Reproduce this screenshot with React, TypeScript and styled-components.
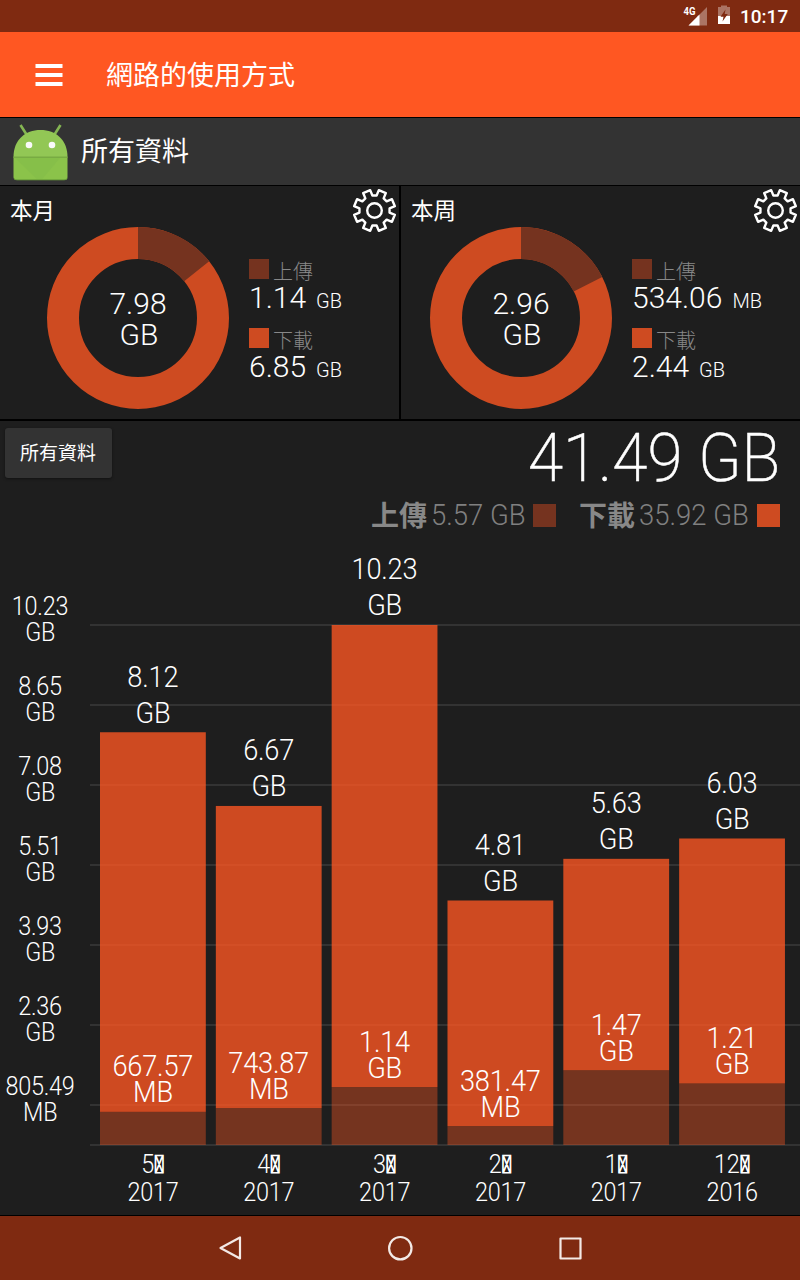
import React from "react";
import styled, { createGlobalStyle } from "styled-components";

const UP = "#75331f";
const DOWN = "#ce4b21";
const PANEL = "#1e1e1e";

const GlobalStyle = createGlobalStyle`
  * { box-sizing: border-box; }
  body {
    margin: 0;
    background: #000;
    color: #fff;
    font-family: Roboto, "Noto Sans CJK TC", sans-serif;
  }
  svg { display: block; }
`;

const Screen = styled.div`
  width: 800px;
  height: 1280px;
  display: flex;
  flex-direction: column;
  background: #000;
  overflow: hidden;
`;

const StatusBar = styled.div`
  height: 32px;
  flex: none;
  background: #7f2a11;
  display: flex;
  justify-content: flex-end;
  align-items: center;
  padding-right: 11px;
`;

const Clock = styled.span`
  width: 49px;
  margin-left: 9px;
  padding-top: 1px;
  font-size: 19px;
  line-height: 32px;
  font-weight: 500;
  white-space: nowrap;
`;

const Toolbar = styled.header`
  height: 85px;
  flex: none;
  background: #ff5722;
  display: flex;
  align-items: center;
  padding-left: 35px;
  margin-bottom: 1px;
`;

const Title = styled.h1`
  margin: 2px 0 0 43px;
  font-size: 27px;
  line-height: 40px;
  font-weight: 400;
`;

const AppRow = styled.div`
  height: 67px;
  flex: none;
  background: #333;
  display: flex;
  align-items: center;
  padding-left: 12px;
  margin-bottom: 1px;
`;

const AppName = styled.div`
  margin-left: 12px;
  padding-top: 1px;
  font-size: 27px;
  line-height: 40px;
`;

const Cards = styled.div`
  flex: none;
  height: 233px;
  display: grid;
  grid-template-columns: 399px 399px;
  column-gap: 2px;
  margin-bottom: 2px;
`;

const Card = styled.section`
  background: ${PANEL};
  display: flex;
  flex-direction: column;
`;

const CardHead = styled.div`
  height: 41px;
  display: flex;
  justify-content: space-between;
  padding: 2px 2px 0 10px;
`;

const CardTitle = styled.div`
  font-size: 22.5px;
  line-height: 47px;
`;

const CardBody = styled.div<{ $inset: number }>`
  display: flex;
  padding-left: ${(p) => p.$inset}px;
`;

const Legend = styled.div`
  margin: 32px 0 0 20px;
`;

const LegendItem = styled.div`
  height: 69px;
`;

const LegendName = styled.div`
  height: 20px;
  display: flex;
  gap: 4px;
  color: #888;
  font-size: 20px;
  line-height: 26px;
  font-weight: 300;
`;

const Swatch = styled.span<{ $color: string; $size: number }>`
  flex: none;
  width: ${(p) => p.$size}px;
  height: ${(p) => p.$size}px;
  background: ${(p) => p.$color};
`;

const LegendValue = styled.div`
  font-size: 30px;
  line-height: 38px;
  font-weight: 300;
  white-space: nowrap;
`;

const Unit = styled.span`
  margin-left: 10px;
  font-size: 20px;
`;

const ChartPanel = styled.section`
  flex: none;
  height: 794px;
  background: ${PANEL};
  margin-bottom: 1px;
`;

const Summary = styled.div`
  height: 119px;
  display: flex;
  justify-content: space-between;
  padding: 7px 20px 0 5px;
`;

const FilterButton = styled.button`
  width: 107px;
  height: 50px;
  padding: 1px 1px 0 0;
  border: 0;
  border-radius: 3px;
  background: #333;
  color: #fff;
  font: 400 19px/50px Roboto, "Noto Sans CJK TC", sans-serif;
  box-shadow: 0 1px 3px rgba(0, 0, 0, 0.45);
`;

const Totals = styled.div`
  display: flex;
  flex-direction: column;
  align-items: flex-end;
`;

const GrandTotal = styled.div`
  height: 61px;
  font-size: 66px;
  line-height: 61px;
  font-weight: 200;
  -webkit-text-stroke: 0.5px #fff;
  white-space: nowrap;
  transform: scaleX(0.966);
  transform-origin: right;
`;

const TotalsLine = styled.div`
  height: 40px;
  margin-top: 6px;
  display: flex;
  align-items: center;
  color: #888;
  font-size: 30px;
  font-weight: 300;
  white-space: nowrap;
`;

const TotalName = styled.b`
  font-size: 28px;
  font-weight: 700;
  margin: -2px 4px 0 0;
`;

const TotalValue = styled.span<{ $width: number }>`
  width: ${(p) => p.$width}px;
  margin: -1px 8px 0 0;
  color: #808080;
  font-weight: 300;
  transform: scaleX(0.915);
  transform-origin: left;
`;

const Gap = styled.span`
  width: 23px;
`;

const NavBar = styled.nav`
  flex: 1;
  background: #7f2a11;
  display: flex;
  justify-content: center;
  align-items: center;
  gap: 140px;
`;

const ChartSvg = styled.svg`
  text {
    fill: #fff;
    font-family: Roboto, sans-serif;
    font-weight: 300;
    letter-spacing: -0.25px;
    text-anchor: middle;
  }
  .box { stroke: #fff; stroke-width: 0.9px; }
`;

const DonutText = styled.text`
  fill: #fff;
  font-family: Roboto, sans-serif;
  font-size: 30px;
  font-weight: 300;
  text-anchor: middle;
`;

function Gear() {
  const pts: string[] = [];
  for (let k = 0; k < 8; k++) {
    const mid = 22.5 + 45 * k;
    [[-14.5, 15.2], [-10.5, 20.8], [10.5, 20.8], [14.5, 15.2]].forEach(([a, r]) => {
      const t = ((mid + a) * Math.PI) / 180;
      pts.push(`${(22.5 + r * Math.sin(t)).toFixed(2)},${(22.5 - r * Math.cos(t)).toFixed(2)}`);
    });
  }
  return (
    <svg width="45" height="45" viewBox="0 0 45 45" fill="none" stroke="#fff" strokeWidth="2.4" strokeLinejoin="round">
      <polygon points={pts.join(" ")} />
      <circle cx="22.5" cy="22.5" r="7.3" />
    </svg>
  );
}

function Donut({ share, value, unit }: { share: number; value: string; unit: string }) {
  const t = share * 2 * Math.PI;
  const x = 91 + 75 * Math.sin(t);
  const y = 91 - 75 * Math.cos(t);
  return (
    <svg width="182" height="182" viewBox="0 0 182 182">
      <circle cx="91" cy="91" r="75" fill="none" stroke={DOWN} strokeWidth="32" />
      <path d={`M91 16A75 75 0 0 1 ${x} ${y}`} fill="none" stroke={UP} strokeWidth="32" />
      <DonutText x="91" y="87">{value}</DonutText>
      <DonutText x="92" y="118">{unit}</DonutText>
    </svg>
  );
}

type Amount = [string, string];

function UsageCard({ title, inset, total, share, up, down }: {
  title: string; inset: number; total: Amount; share: number; up: Amount; down: Amount;
}) {
  return (
    <Card>
      <CardHead>
        <CardTitle>{title}</CardTitle>
        <Gear />
      </CardHead>
      <CardBody $inset={inset}>
        <Donut share={share} value={total[0]} unit={total[1]} />
        <Legend>
          <LegendItem>
            <LegendName><Swatch $color={UP} $size={20} />上傳</LegendName>
            <LegendValue>{up[0]}<Unit>{up[1]}</Unit></LegendValue>
          </LegendItem>
          <LegendItem>
            <LegendName><Swatch $color={DOWN} $size={20} />下載</LegendName>
            <LegendValue>{down[0]}<Unit>{down[1]}</Unit></LegendValue>
          </LegendItem>
        </Legend>
      </CardBody>
    </Card>
  );
}

const ticks: Amount[] = [
  ["10.23", "GB"], ["8.65", "GB"], ["7.08", "GB"], ["5.51", "GB"],
  ["3.93", "GB"], ["2.36", "GB"], ["805.49", "MB"],
];

const months = [
  { month: "5", year: "2017", total: 8.12, up: 0.652, label: ["667.57", "MB"] },
  { month: "4", year: "2017", total: 6.67, up: 0.7264, label: ["743.87", "MB"] },
  { month: "3", year: "2017", total: 10.23, up: 1.14, label: ["1.14", "GB"] },
  { month: "2", year: "2017", total: 4.81, up: 0.3725, label: ["381.47", "MB"] },
  { month: "1", year: "2017", total: 5.63, up: 1.47, label: ["1.47", "GB"] },
  { month: "12", year: "2016", total: 6.03, up: 1.21, label: ["1.21", "GB"] },
];

/* Two stacked, slightly condensed lines centred on x; y is the first baseline. */
function Label({ x, y, pitch, size, stretch, first, second }: {
  x: number; y: number; pitch: number; size: number; stretch: number;
  first: React.ReactNode; second: string;
}) {
  return (
    <g transform={`translate(${x} ${y}) scale(${stretch} 1)`}>
      <text fontSize={size}>
        <tspan x="0" y="0">{first}</tspan>
        <tspan x="0.2" y={pitch}>{second}</tspan>
      </text>
    </g>
  );
}

function BarChart() {
  const top = 85;
  const base = 605;
  const scale = (base - top) / 10.23;
  return (
    <ChartSvg width="800" height="675" viewBox="0 0 800 675">
      {ticks.map(([v, u], i) => (
        <g key={v}>
          <rect x="90" y={top + i * 80 - 1} width="710" height="2" fill="#333" />
          <Label x={40} y={top + i * 80 - 10.3} pitch={26} size={25} stretch={0.938} first={v} second={u} />
        </g>
      ))}
      <rect x="90" y={base - 1} width="710" height="2" fill="#333" />
      {months.map((m, i) => {
        const x = 100 + i * 115.83;
        const c = x + 52.8;
        const y = base - m.total * scale;
        const s = base - m.up * scale;
        return (
          <g key={m.month}>
            <rect x={x} y={y} width="105.8" height={s - y} fill="#ff5722" fillOpacity="0.783" />
            <rect x={x} y={s} width="105.8" height={base - s} fill="#ff5722" fillOpacity="0.39" />
            <Label x={c} y={y - 45.7} pitch={36} size={30} stretch={0.908} first={m.total.toFixed(2)} second="GB" />
            <Label x={c} y={s - 35.4} pitch={26} size={30} stretch={0.908} first={m.label[0]} second={m.label[1]} />
            <Label
              x={c} y={633.3} pitch={28} size={25} stretch={0.938}
              first={<>{m.month}<tspan className="box">{"\uE123"}</tspan></>}
              second={m.year}
            />
          </g>
        );
      })}
    </ChartSvg>
  );
}

export default function App() {
  return (
    <Screen>
      <GlobalStyle />
      <StatusBar>
        <svg width="48" height="32" viewBox="0 0 48 32">
          <text x="0.5" y="15.3" fill="#fff" fontFamily="Roboto" fontSize="10.5" fontWeight="700" textLength="12" lengthAdjust="spacingAndGlyphs">4G</text>
          <path d="M24 7V25.500H5.500L14 17V16L15.500 15.500Z" fill="#fff" fillOpacity=".35" />
          <path d="M16.500 14.500V25.500H5.500Z" fill="#fff" />
          <path d="M35 7H38V5.500H44V7H47V16H35Z" fill="#fff" fillOpacity=".35" />
          <path d="M35 16H47V24H35Z" fill="#fff" />
          <path d="M42.500 9.500L37.500 16.800H40.500L39.500 21.500L44.800 14H41.700Z" fill="#7f2a11" />
        </svg>
        <Clock>10:17</Clock>
      </StatusBar>

      <Toolbar>
        <svg width="28" height="22" viewBox="0 0 28 22" fill="#fff">
          <rect x="0.500" width="27" height="4" />
          <rect x="0.500" y="9" width="27" height="4" />
          <rect x="0.500" y="18" width="27" height="4" />
        </svg>
        <Title>網路的使用方式</Title>
      </Toolbar>

      <AppRow>
        <svg width="57" height="60" viewBox="0 0 57 60">
          <g stroke="#84b552" strokeWidth="2.600">
            <path d="M8.500 3L14.500 12.500M48.500 3L42.500 12.500" />
          </g>
          <path d="M1.500 35C1.500 18 13 8 28.500 8S55.500 18 55.500 35Z" fill="#92c755" />
          <path d="M1.500 35H55.500V55Q55.500 58 52.500 58H4.500Q1.500 58 1.500 55Z" fill="#8bc34a" />
          <path d="M3 36H48L30 57.500H25Z" fill="#7fb648" opacity=".35" />
          <path d="M1.500 35.200H55.500" stroke="#78ab43" strokeWidth="1.500" />
          <path d="M2 56.500Q3 57.800 5 57.800H52Q54.500 57.800 55.300 56.500" fill="none" stroke="#689f38" strokeWidth="1" />
          <circle cx="17" cy="23" r="3.300" fill="#fafafa" />
          <circle cx="40" cy="23" r="3.300" fill="#fafafa" />
        </svg>
        <AppName>所有資料</AppName>
      </AppRow>

      <Cards>
        <UsageCard title="本月" inset={47} total={["7.98", "GB"]} share={0.143} up={["1.14", "GB"]} down={["6.85", "GB"]} />
        <UsageCard title="本周" inset={29} total={["2.96", "GB"]} share={0.1755} up={["534.06", "MB"]} down={["2.44", "GB"]} />
      </Cards>

      <ChartPanel>
        <Summary>
          <FilterButton>所有資料</FilterButton>
          <Totals>
            <GrandTotal>41.49 GB</GrandTotal>
            <TotalsLine>
              <TotalName>上傳</TotalName>
              <TotalValue $width={94}>5.57 GB</TotalValue>
              <Swatch $color={UP} $size={23} />
              <Gap />
              <TotalName>下載</TotalName>
              <TotalValue $width={110}>35.92 GB</TotalValue>
              <Swatch $color={DOWN} $size={23} />
            </TotalsLine>
          </Totals>
        </Summary>
        <BarChart />
      </ChartPanel>

      <NavBar>
        <svg width="30" height="30" viewBox="0 0 30 30" fill="none" stroke="#f3e9e6" strokeWidth="2.200" strokeLinejoin="round">
          <path d="M25 4.500V25.500L5.500 15Z" />
        </svg>
        <svg width="30" height="30" viewBox="0 0 30 30" fill="none" stroke="#f3e9e6" strokeWidth="2.200">
          <circle cx="15.300" cy="15.200" r="11.200" />
        </svg>
        <svg width="30" height="30" viewBox="0 0 30 30" fill="none" stroke="#f3e9e6" strokeWidth="2.200" strokeLinejoin="round">
          <rect x="5.500" y="5.500" width="20" height="20" />
        </svg>
      </NavBar>
    </Screen>
  );
}
